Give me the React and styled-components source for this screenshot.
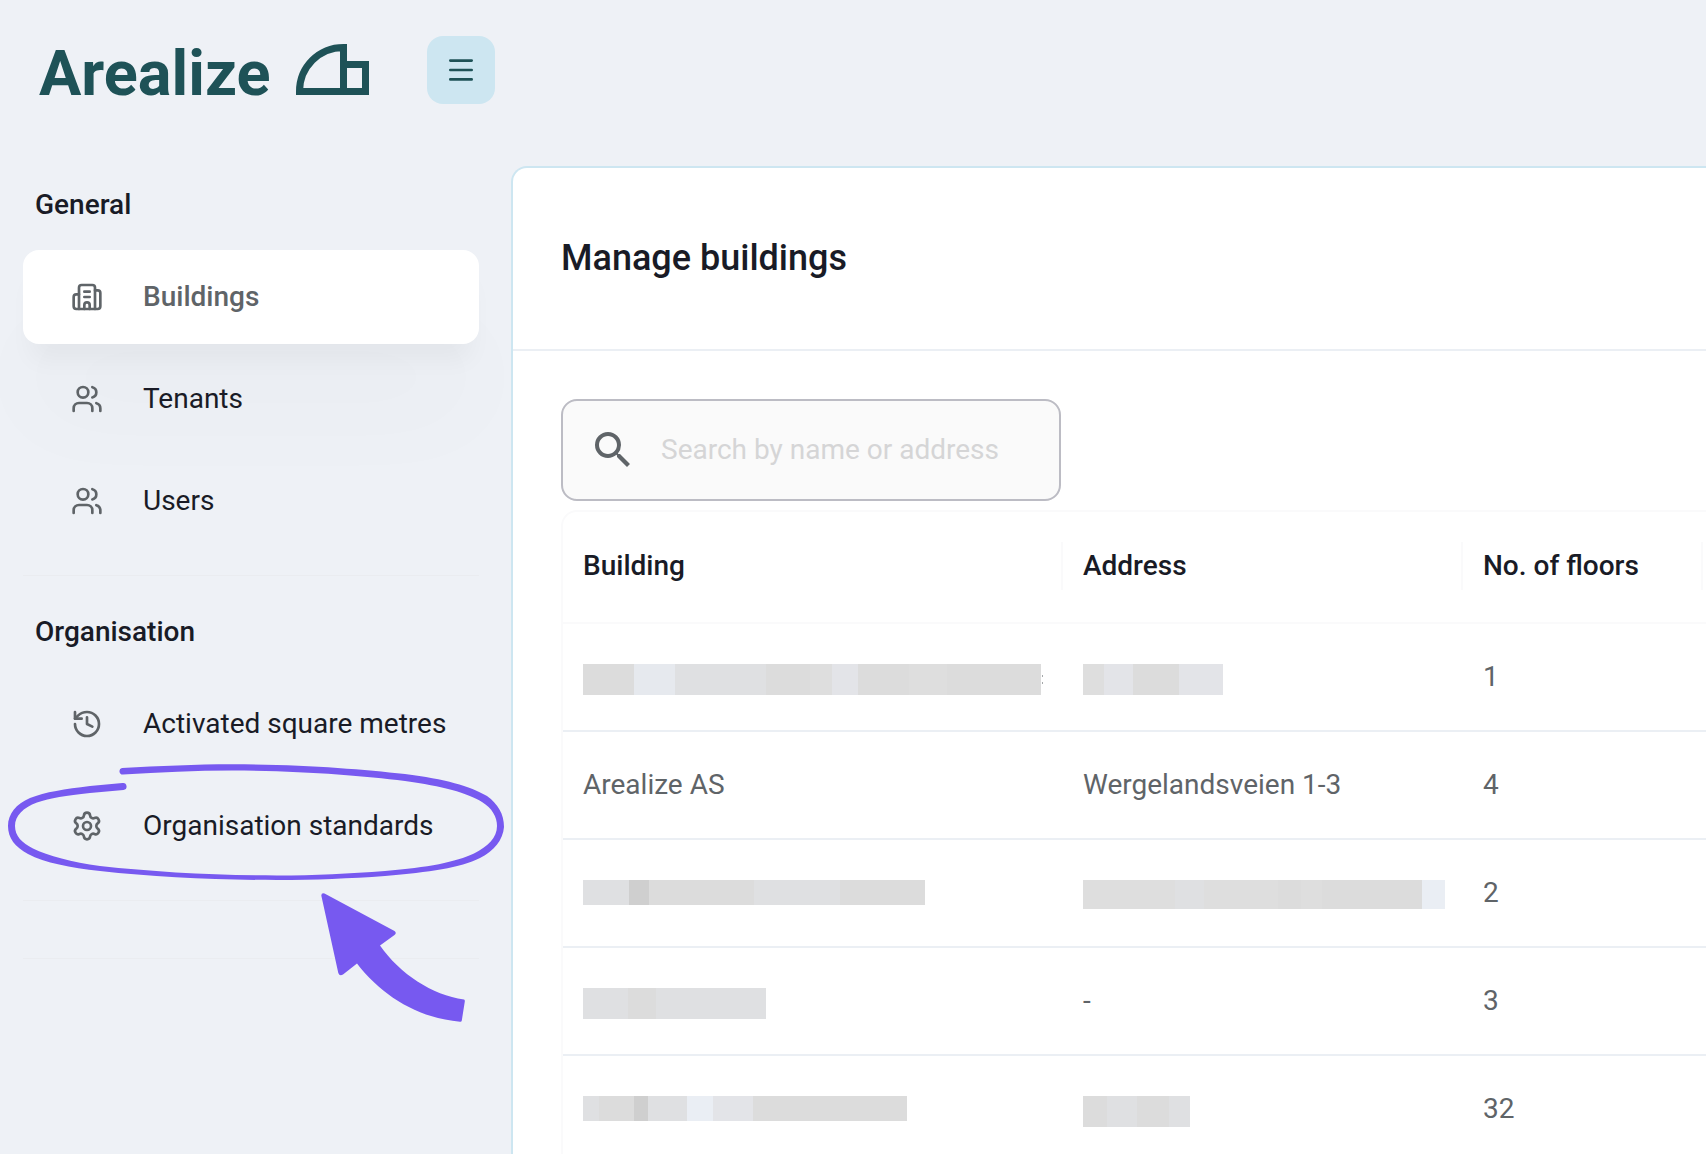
import React, { useState } from 'react';
import styled, { createGlobalStyle } from 'styled-components';
import { Building2, History, Settings, Users } from 'lucide-react';
import { MdSearch } from 'react-icons/md';

const colors = {
  page: '#eef1f6',
  brand: '#1e5257',
  accent: '#cde6f1',
  ink: '#191b26',
  muted: '#5f6468',
  line: '#ebeff4',
  faint: '#fafafb',
  mark: '#7759f0',
};

const GlobalStyle = createGlobalStyle`
  *, *::before, *::after {
    box-sizing: border-box;
  }

  body {
    margin: 0;
    background: ${colors.page};
    color: ${colors.ink};
    font-family: Roboto, 'Liberation Sans', sans-serif;
    font-size: 28px;
    line-height: 32px;
  }
`;

const Layout = styled.div`
  display: flex;
  height: 100vh;
  overflow: hidden;
`;

const Sidebar = styled.aside`
  display: flex;
  flex-direction: column;
  flex: 0 0 511px;
  padding: 36px 32px 0 23px;
`;

const Brand = styled.div`
  display: flex;
  align-items: center;
  justify-content: space-between;
  margin: 0 -16px 45px 0;
  padding-left: 16px;
`;

const Logo = styled.a`
  display: flex;
  align-items: baseline;
  gap: 26px;
  padding-top: 8px;
  color: ${colors.brand};
  font-size: 63px;
  font-weight: 700;
  line-height: 60px;
  text-decoration: none;
`;

const MenuButton = styled.button`
  display: flex;
  align-items: center;
  justify-content: center;
  width: 68px;
  height: 68px;
  padding: 0;
  border: 0;
  border-radius: 16px;
  background: ${colors.accent};
  color: ${colors.brand};
  cursor: pointer;
`;

const NavSection = styled.section`
  min-height: 58px;
  padding: ${(props) => (props.$empty ? '0' : '40px 0 27px')};
  border-bottom: 1px solid #eaecf0;
`;

const SectionTitle = styled.h2`
  margin: 0 0 29px;
  padding-left: 12px;
  font-size: 28px;
  font-weight: 500;
  line-height: 32px;
`;

const NavList = styled.ul`
  display: flex;
  flex-direction: column;
  gap: 8px;
  margin: 0;
  padding: 0;
  list-style: none;
`;

const NavItem = styled.li`
  position: relative;
`;

const NavLink = styled.a`
  display: flex;
  align-items: center;
  gap: 40px;
  height: 94px;
  padding: 0 0 0 48px;
  border-radius: 16px;
  background: ${(props) => (props.$active ? '#fff' : 'transparent')};
  box-shadow: ${(props) =>
    props.$active ? '0 24px 24px -8px rgba(0, 0, 0, 0.04), 0 80px 100px rgba(0, 0, 0, 0.02)' : 'none'};
  color: ${(props) => (props.$active ? colors.muted : colors.ink)};
  font-weight: ${(props) => (props.$active ? 500 : 400)};
  text-decoration: none;
  white-space: nowrap;

  svg {
    flex: none;
    color: ${colors.muted};
  }
`;

const Highlight = styled.svg`
  position: absolute;
  top: -29px;
  left: -23px;
  z-index: 1;
  pointer-events: none;
`;

const Main = styled.main`
  display: flex;
  flex: 1;
  min-width: 0;
  padding-top: 166px;
`;

const Panel = styled.div`
  flex: 1;
  min-width: 0;
  overflow: hidden;
  border: solid ${colors.accent};
  border-width: 2px 0 0 2px;
  border-radius: 16px 0 0 0;
  background: #fff;
`;

const PanelHeader = styled.header`
  padding: 70px 48px 71px;
  border-bottom: 2px solid ${colors.line};
`;

const PanelTitle = styled.h1`
  margin: 0;
  font-size: 36px;
  font-weight: 500;
  line-height: 40px;
`;

const PanelBody = styled.div`
  padding: 48px 0 0 48px;
`;

const SearchBox = styled.label`
  display: flex;
  align-items: center;
  gap: 24px;
  width: 500px;
  max-width: 100%;
  height: 102px;
  padding: 0 24px 0 26px;
  border: 2px solid #bcbcc4;
  border-radius: 16px;
  background: #fafafa;
  color: ${colors.muted};

  svg {
    flex: none;
  }
`;

const SearchInput = styled.input`
  flex: 1;
  min-width: 0;
  padding: 0;
  border: 0;
  outline: 0;
  background: transparent;
  color: ${colors.ink};
  font: inherit;

  &::placeholder {
    color: #d5d5d6;
    opacity: 1;
  }
`;

const TableWrap = styled.div`
  margin-top: 9px;
  overflow: hidden;
  border: solid ${colors.faint};
  border-width: 2px 0 0 2px;
  border-radius: 16px 0 0 0;
`;

const Table = styled.table`
  width: 1200px;
  table-layout: fixed;
  border-collapse: separate;
  border-spacing: 0;
  text-align: left;
`;

const Col = styled.col`
  width: ${(props) => props.$width}px;
`;

const HeadCell = styled.th`
  height: 112px;
  padding: 0 0 2px;
  border-bottom: 2px solid ${colors.faint};
  font-weight: 500;
`;

const HeadLabel = styled.div`
  height: 48px;
  padding-left: 20px;
  border-right: 2px solid ${colors.faint};
  line-height: 48px;
`;

const Cell = styled.td`
  height: 108px;
  padding: ${(props) => (props.$masked ? '40px 20px 0' : '0 20px')};
  border-bottom: 2px solid ${colors.line};
  color: ${colors.muted};
  vertical-align: ${(props) => (props.$masked ? 'top' : 'middle')};
`;

const Mask = styled.div`
  display: flex;
  height: ${(props) => props.$height}px;
`;

const MaskBlock = styled.span`
  flex: none;
  width: ${(props) => props.$width}px;
  background: ${(props) => props.$color};
`;

const MaskRest = styled.span`
  align-self: center;
  width: 1px;
  height: 9px;
  margin-left: 1px;
  border: solid #a5a8aa;
  border-width: 2px 0;
`;

const navigation = [
  {
    title: 'General',
    items: [
      { label: 'Buildings', icon: Building2, active: true },
      { label: 'Tenants', icon: Users },
      { label: 'Users', icon: Users },
    ],
  },
  {
    title: 'Organisation',
    items: [
      { label: 'Activated square metres', icon: History },
      { label: 'Organisation standards', icon: Settings, highlighted: true },
    ],
  },
];

const shades = {
  a: '#dcdcdc',
  b: '#dedede',
  c: '#dfe0e2',
  d: '#e3e4e8',
  e: '#e6e9ee',
  f: '#eaeef4',
  g: '#cfcfcf',
};

// A masked value is a bar height and a list of [width, shade] blocks.
const buildings = [
  {
    id: 1,
    name: {
      height: 31,
      rest: true,
      blocks: [[51, 'a'], [41, 'e'], [91, 'c'], [44, 'a'], [22, 'b'], [26, 'd'], [51, 'a'], [38, 'b'], [94, 'a']],
    },
    address: { height: 31, blocks: [[21, 'b'], [29, 'd'], [46, 'a'], [44, 'd']] },
    floors: 1,
  },
  { id: 2, name: 'Arealize AS', address: 'Wergelandsveien 1-3', floors: 4 },
  {
    id: 3,
    name: { height: 25, blocks: [[46, 'c'], [20, 'g'], [105, 'a'], [86, 'c'], [85, 'a']] },
    address: {
      height: 29,
      blocks: [[92, 'b'], [29, 'c'], [74, 'b'], [23, 'a'], [21, 'b'], [100, 'a'], [23, 'f']],
    },
    floors: 2,
  },
  {
    id: 4,
    name: { height: 31, blocks: [[45, 'c'], [28, 'a'], [110, 'c']] },
    address: '-',
    floors: 3,
  },
  {
    id: 5,
    name: {
      height: 25,
      blocks: [[16, 'c'], [35, 'a'], [14, 'g'], [39, 'c'], [26, 'f'], [40, 'd'], [154, 'a']],
    },
    address: { height: 31, blocks: [[24, 'a'], [30, 'c'], [32, 'a'], [21, 'c']] },
    floors: 32,
  },
];

const LogoMark = () => (
  <svg width="73" height="51" viewBox="0 0 73 51" fill="none" stroke="currentColor" strokeWidth="7" aria-hidden="true">
    <path d="M3.5 47.5C3.5 23 23 3.5 47.5 3.5V47.5Z" />
    <path d="M47.5 20.5H69.5V47.5H47.5" />
  </svg>
);

const MenuIcon = () => (
  <svg width="24" height="24" viewBox="0 0 24 24" stroke="currentColor" strokeWidth="2.6" strokeLinecap="round" aria-hidden="true">
    <path d="M1.3 2.6H22.7M1.3 12H22.7M1.3 21.4H22.7" />
  </svg>
);

const HighlightMark = () => (
  <Highlight width="511" height="290" viewBox="0 0 511 290" fill={colors.mark} aria-hidden="true">
    <path d="M122 18C160 16 195 14.2 232 14.2C305 14.5 360 19 405 24C445 29 470 36 487 46C498 54 504 64 504 77C503 90 494 101 480 108C460 118 430 122 385 126C350 128.500 315 130 277 130C215 130 155 127 100 121C70 117.500 45 113 28 104C15 97 8 88 8 76C8 64 16 54 30 48C45 42 65 39 90 36L122.500 33A3.500 3.500 0 0 1 123.500 40L90 43C66 45.500 50 48 37 52.500C23 57.500 15 66 15 76C15 86 22 93 33 98.500C48 106 72 112 100 116C155 122 215 125.500 277 125.500C315 125.500 350 123.500 385 121C428 117.500 456 112 474 103.500C488 96 497 88 497 76C497 67 492 58 482 52C468 43 442 36 405 31C360 25.500 305 21 232 20.500C195 20.500 160 22.500 123 24.500A3.300 3.300 0 0 1 122 18Z" />
    <path d="M324.500 143.500L394.500 181Q397 183 394.500 185L380 195.500C400 224 432 245 464 249.500Q465 250 464.800 251.500L461.800 270.500Q461.500 272 460 271.700C418 268 382 246 357 213.500L343 224.500Q339.500 226.500 338.300 223L321.300 145.500Q321.500 142.500 324.500 143.500Z" />
  </Highlight>
);

const Value = ({ value }) => {
  if (typeof value !== 'object') return <Cell>{value}</Cell>;
  return (
    <Cell $masked>
      <Mask $height={value.height}>
        {value.blocks.map(([width, shade], index) => (
          <MaskBlock key={index} $width={width} $color={shades[shade]} />
        ))}
        {value.rest && <MaskRest />}
      </Mask>
    </Cell>
  );
};

const App = () => {
  const [query, setQuery] = useState('');

  return (
    <>
      <GlobalStyle />
      <Layout>
        <Sidebar>
          <Brand>
            <Logo href="#home">
              Arealize
              <LogoMark />
            </Logo>
            <MenuButton type="button" aria-label="Toggle menu">
              <MenuIcon />
            </MenuButton>
          </Brand>
          <nav>
            {navigation.map((section) => (
              <NavSection key={section.title}>
                <SectionTitle>{section.title}</SectionTitle>
                <NavList>
                  {section.items.map(({ label, icon: Icon, active, highlighted }) => (
                    <NavItem key={label}>
                      <NavLink href="#" $active={active} aria-current={active ? 'page' : undefined}>
                        <Icon size={32} />
                        {label}
                      </NavLink>
                      {highlighted && <HighlightMark />}
                    </NavItem>
                  ))}
                </NavList>
              </NavSection>
            ))}
            <NavSection $empty />
          </nav>
        </Sidebar>
        <Main>
          <Panel>
            <PanelHeader>
              <PanelTitle>Manage buildings</PanelTitle>
            </PanelHeader>
            <PanelBody>
              <SearchBox>
                <MdSearch size={48} />
                <SearchInput
                  type="text"
                  aria-label="Search by name or address"
                  placeholder="Search by name or address"
                  value={query}
                  onChange={(e) => setQuery(e.target.value)}
                />
              </SearchBox>
              <TableWrap>
                <Table>
                  <colgroup>
                    <Col $width={500} />
                    <Col $width={400} />
                    <Col $width={240} />
                    <Col $width={60} />
                  </colgroup>
                  <thead>
                    <tr>
                      <HeadCell scope="col">
                        <HeadLabel>Building</HeadLabel>
                      </HeadCell>
                      <HeadCell scope="col">
                        <HeadLabel>Address</HeadLabel>
                      </HeadCell>
                      <HeadCell scope="col">
                        <HeadLabel>No. of floors</HeadLabel>
                      </HeadCell>
                      <HeadCell as="td" />
                    </tr>
                  </thead>
                  <tbody>
                    {buildings.map((building) => (
                      <tr key={building.id}>
                        <Value value={building.name} />
                        <Value value={building.address} />
                        <Value value={building.floors} />
                        <Cell />
                      </tr>
                    ))}
                  </tbody>
                </Table>
              </TableWrap>
            </PanelBody>
          </Panel>
        </Main>
      </Layout>
    </>
  );
};

export default App;
